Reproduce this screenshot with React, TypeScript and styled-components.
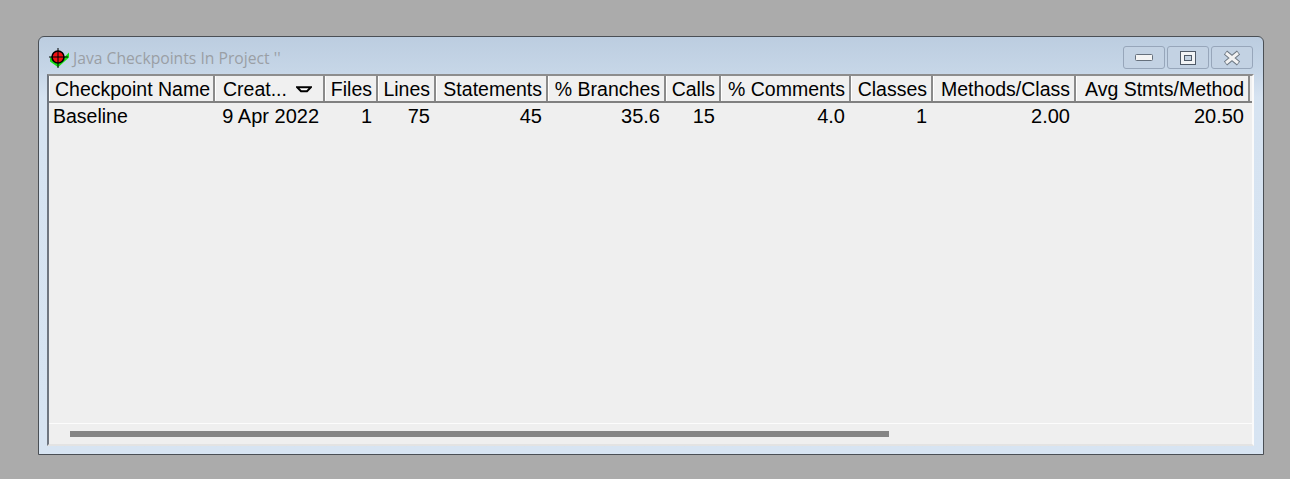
import React from 'react';
import styled, {createGlobalStyle} from "styled-components";

const columns = [
    {title: "Checkpoint Name", width: 166, value: "Baseline", left: true},
    {title: "Creat...", width: 110, value: "9 Apr 2022", sorted: true},
    {title: "Files", width: 53, value: "1"},
    {title: "Lines", width: 58, value: "75"},
    {title: "Statements", width: 112, value: "45"},
    {title: "% Branches", width: 118, value: "35.6"},
    {title: "Calls", width: 55, value: "15"},
    {title: "% Comments", width: 130, value: "4.0"},
    {title: "Classes", width: 82, value: "1"},
    {title: "Methods/Class", width: 143, value: "2.00"},
    {title: "Avg Stmts/Method", width: 174, value: "20.50"},
];

const AppIcon = () => (
    <svg width="20" height="20" viewBox="0 0 20 20">
        <path d="M2 11 L9 17 L19 7 L19 9 L9 18 L2 13 Z" fill="#16e016" stroke="#16e016" strokeWidth="2"/>
        <circle cx="9" cy="9" r="6" fill="#f01010" stroke="#000" strokeWidth="1.6"/>
        <path d="M9 0V20M0 9H19" stroke="#000" strokeWidth="1"/>
    </svg>
);

const SortArrow = () => (
    <svg width="16" height="7" viewBox="0 0 16 7">
        <path d="M1 1.2H15L11 5.2H5Z" fill="#fff" stroke="#000" strokeWidth="2"/>
    </svg>
);

const App = () => {
    return (
        <>
            <GlobalStyle/>
            <Page>
                <Window>
                    <TitleBar>
                        <AppIcon/>
                        <Title>Java Checkpoints In Project ''</Title>
                        <Controls>
                            <ControlButton>
                                <svg width="18" height="7" viewBox="0 0 18 7">
                                    <rect x="0.5" y="0.5" width="17" height="6" rx="1" fill="#f4f4f4" stroke="#66707c"/>
                                </svg>
                            </ControlButton>
                            <ControlButton>
                                <svg width="18" height="16" viewBox="0 0 18 16">
                                    <rect x="1.5" y="1.5" width="15" height="13" fill="#f2f4f6" stroke="#4f5a68"/>
                                    <rect x="5.5" y="5.5" width="7" height="5" fill="#c3d2e2" stroke="#4f5a68"/>
                                </svg>
                            </ControlButton>
                            <ControlButton>
                                <svg width="18" height="16" viewBox="0 0 18 16">
                                    <path d="M2.5 2.5L15.5 13.5M15.5 2.5L2.5 13.5" stroke="#6c7681" strokeWidth="5"/>
                                    <path d="M3 3L15 13M15 3L3 13" stroke="#f2f2f2" strokeWidth="3"/>
                                </svg>
                            </ControlButton>
                        </Controls>
                    </TitleBar>
                    <Pane>
                        <HeaderRow>
                            {columns.map(column => (
                                <HeaderCell key={column.title} $width={column.width}>
                                    <span>{column.title}</span>
                                    {column.sorted && <SortArrow/>}
                                </HeaderCell>
                            ))}
                        </HeaderRow>
                        <Body>
                            <DataRow>
                                {columns.map(column => (
                                    <DataCell key={column.title} $width={column.width} $left={column.left}>
                                        {column.value}
                                    </DataCell>
                                ))}
                            </DataRow>
                        </Body>
                        <ScrollTrack>
                            <ScrollThumb/>
                        </ScrollTrack>
                    </Pane>
                </Window>
            </Page>
        </>
    );
};

export default App;

const GlobalStyle = createGlobalStyle`
  html, body {
    margin: 0;
    padding: 0;
    background: #ababab;
  }
`

const Page = styled.div`
  box-sizing: border-box;
  width: 1290px;
  height: 479px;
  padding: 36px 26px 24px 38px;
  background: #ababab;
  font-family: "Liberation Sans", Arial, sans-serif;
  color: #000;
`

const Window = styled.div`
  box-sizing: border-box;
  width: 100%;
  height: 419px;
  display: flex;
  flex-direction: column;
  padding: 0 9px 8px 8px;
  border: 1px solid #4a4f55;
  border-radius: 6px 6px 0 0;
  background: linear-gradient(#bccde0 0, #c6d6e7 34px, #d6e3f1 60px, #d7e4f2 100%);
`

const TitleBar = styled.div`
  height: 37px;
  flex: none;
  display: flex;
  align-items: center;
  gap: 4px;
  padding: 5px 1px 0 2px;
  box-sizing: border-box;
`

const Title = styled.span`
  font-family: "Open Sans", "Noto Sans", sans-serif;
  font-size: 15.7px;
  color: #9a9fa5;
`

const Controls = styled.div`
  margin-left: auto;
  display: flex;
  gap: 2px;
  align-self: flex-start;
  margin-top: 4px;
`

const ControlButton = styled.div`
  box-sizing: border-box;
  width: 42px;
  height: 23px;
  display: flex;
  align-items: center;
  justify-content: center;
  border: 1px solid #97a6ba;
  border-radius: 3px;
  background: #c3d2e3;
`

const Pane = styled.div`
  flex: 1;
  min-height: 0;
  display: flex;
  flex-direction: column;
  background: #efefef;
  border-left: 2px solid #6f7680;
  border-top: 2px solid #8d8d8d;
  border-right: 2px solid #fafafa;
  border-bottom: 2px solid #e3e3e3;
`

const HeaderRow = styled.div`
  height: 25px;
  flex: none;
  display: flex;
  border-bottom: 2px solid #808080;
  background: #f0f0f0;
`

const HeaderCell = styled.div<{$width: number}>`
  box-sizing: border-box;
  width: ${props => props.$width}px;
  flex: none;
  display: flex;
  align-items: center;
  padding: 1px 4px 0 2px;
  font-size: 19.5px;
  white-space: nowrap;
  border-right: 2px solid #8a8a8a;
  border-left: 1px solid #fff;
  span {
    margin-left: auto;
  }
  svg {
    margin: 0 7px 0 auto;
  }
  &:first-child {
    padding-left: 5px;
  }
  &:nth-child(2) {
    padding-left: 7px;
  }
  &:first-child span, &:nth-child(2) span {
    margin-left: 0;
  }
`

const Body = styled.div`
  flex: 1;
  min-height: 0;
`

const DataRow = styled.div`
  height: 27px;
  display: flex;
  align-items: center;
`

const DataCell = styled.div<{$width: number; $left?: boolean}>`
  box-sizing: border-box;
  width: ${props => props.$width}px;
  flex: none;
  padding: 0 6px 0 4px;
  font-size: ${props => props.$left ? "19.5px" : "20px"};
  white-space: nowrap;
  text-align: ${props => props.$left ? "left" : "right"};
`

const ScrollTrack = styled.div`
  height: 21px;
  flex: none;
  box-sizing: border-box;
  padding: 7px 0 0 21px;
  border-top: 1px solid #fcfcfc;
`

const ScrollThumb = styled.div`
  width: 819px;
  height: 6px;
  background: #858585;
`
